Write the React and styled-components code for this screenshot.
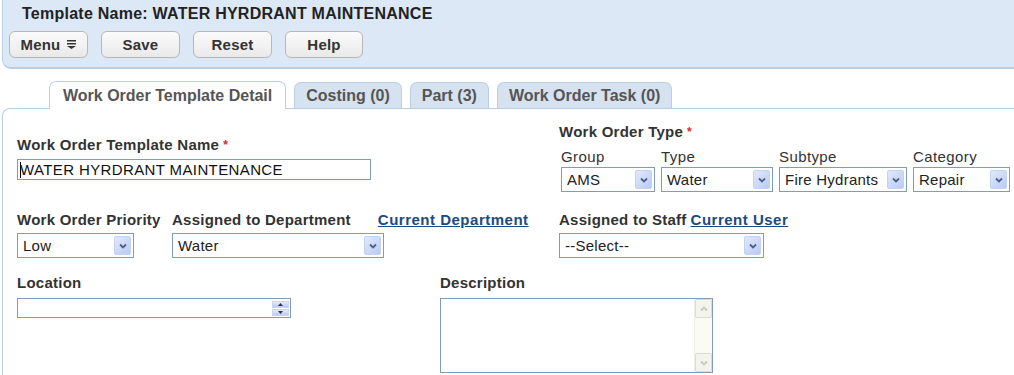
import React from "react"
import styled, { createGlobalStyle } from "styled-components"

const Global = createGlobalStyle`
  body {
    margin: 0;
    background: #fff;
    font-family: "Liberation Sans", Arial, sans-serif;
    color: #333;
  }
`

const Page = styled.div`
  width: 1014px;
  height: 375px;
  overflow: hidden;
  padding-left: 2px;
  box-sizing: border-box;
`

const Header = styled.div`
  background: #dce8f6;
  border-left: 1px solid #bcd2ea;
  border-bottom: 2px solid #b9cfe6;
  border-bottom-left-radius: 9px;
  height: 69px;
  padding: 5px 0 0 19px;
  box-sizing: border-box;
`

const Title = styled.div`
  font-size: 16px;
  font-weight: bold;
  line-height: 18px;
  letter-spacing: 0.25px;
  color: #222;
`

const Toolbar = styled.div`
  display: flex;
  gap: 13px;
  margin-top: 8px;
  margin-left: -13px;
`

const ToolButton = styled.button`
  width: ${p => p.$w || 79}px;
  height: 27px;
  display: flex;
  align-items: center;
  justify-content: center;
  gap: 7px;
  border: 1px solid #b7b7b7;
  border-radius: 6px;
  background: linear-gradient(#fbfbfb, #e9e9e9);
  font-family: "Liberation Sans", Arial, sans-serif;
  font-size: 15px;
  font-weight: bold;
  letter-spacing: 0.2px;
  color: #333;
  padding: 0;
`

const TabRow = styled.div`
  display: flex;
  gap: 8px;
  padding-left: 47px;
  margin-top: 12px;
  position: relative;
  z-index: 1;
`

const Tab = styled.div`
  padding: 0 ${p => (p.$active ? 13 : 11)}px;
  display: flex;
  align-items: center;
  font-size: 16px;
  font-weight: bold;
  color: #555;
  border: 1px solid #b9cfe6;
  border-bottom: none;
  border-radius: 7px 7px 0 0;
  background: ${p => (p.$active ? "#fff" : "#d6e2ef")};
  height: ${p => (p.$active ? 27 : 25)}px;
  align-self: flex-end;
  margin-bottom: ${p => (p.$active ? -1 : 0)}px;
`

const Panel = styled.div`
  border-top: 1px solid #b9cfe6;
  border-left: 1px solid #b9cfe6;
  border-top-left-radius: 8px;
  padding: 14px 0 0 14px;
  height: 280px;
`

const Row = styled.div`
  display: flex;
  align-items: flex-start;
  margin-top: ${p => p.$mt || 0}px;
`

const Block = styled.div`
  width: ${p => (p.$w ? p.$w + "px" : "auto")};
  padding-top: ${p => p.$pt || 0}px;
  flex-shrink: 0;
`

const Label = styled.div`
  font-size: 15px;
  font-weight: bold;
  line-height: 18px;
  letter-spacing: 0.25px;
  color: #333;
  white-space: nowrap;
  margin-bottom: ${p => p.$mb ?? 4}px;
  display: flex;
  gap: ${p => p.$gap || 4}px;
`

const Req = styled.span`
  color: #e0262a;
  font-size: 12px;
`

const Link = styled.a`
  color: #1a4b82;
  text-decoration: underline;
  letter-spacing: 0.5px;
  cursor: pointer;
`

const SubLabel = styled.div`
  font-size: 15px;
  line-height: 18px;
  letter-spacing: 0.4px;
  color: #333;
  margin-bottom: 1px;
`

const TypeGrid = styled.div`
  display: grid;
  grid-template-columns: 94px 112px 128px 97px;
  column-gap: 6px;
  margin-top: 7px;
  padding-left: 2px;
`

const TextInput = styled.div`
  width: ${p => p.$w}px;
  height: ${p => p.$h || 21}px;
  box-sizing: border-box;
  border: 1px solid #7f9db9;
  font-size: 15px;
  line-height: 19px;
  letter-spacing: 0.38px;
  padding-left: 2px;
  color: #111;
  display: flex;
  align-items: center;
  justify-content: space-between;
  background: #fff;
`

const Caret = styled.span`
  width: 1px;
  height: 16px;
  background: #000;
  margin-right: -1px;
`

const SelectBox = styled.div`
  width: ${p => p.$w}px;
  height: 25px;
  box-sizing: border-box;
  border: 1px solid #7f9db9;
  display: flex;
  align-items: center;
  justify-content: space-between;
  padding: 0 2px 0 5px;
  font-size: 15px;
  letter-spacing: 0.25px;
  color: #222;
  background: #fff;
`

const ArrowBtn = styled.span`
  width: 17px;
  height: 19px;
  box-sizing: border-box;
  border: 1px solid #c3d1f3;
  border-radius: 2px;
  background: linear-gradient(135deg, #e1e9fd, #b9caf5);
  display: flex;
  align-items: center;
  justify-content: center;
`

const Spin = styled.div`
  display: flex;
  flex-direction: column;
  gap: 1px;
  margin-right: 1px;
`

const SpinBtn = styled.span`
  width: 17px;
  height: 7px;
  background: linear-gradient(#e3eafc, #b8c9f4);
  border: 1px solid #c9d5f3;
  box-sizing: border-box;
  display: flex;
  align-items: center;
  justify-content: center;
`

const TextArea = styled.div`
  width: 273px;
  height: 75px;
  box-sizing: border-box;
  border: 1px solid #7f9db9;
  display: flex;
  justify-content: flex-end;
  background: #fff;
`

const ScrollBar = styled.div`
  width: 17px;
  background: #fbfbf6;
  border-left: 1px solid #eeeee6;
  display: flex;
  flex-direction: column;
  justify-content: space-between;
`

const ScrollBtn = styled.span`
  height: 17px;
  background: #f4f4ef;
  border: 1px solid #dcdcd4;
  border-radius: 2px;
  display: flex;
  align-items: center;
  justify-content: center;
`

const Chevron = ({ up, color = "#4d5f86" }) => (
  <svg width="8" height="6" viewBox="0 0 8 6">
    <path
      d={up ? "M1 4.5 L4 1.5 L7 4.5" : "M1 1.5 L4 4.5 L7 1.5"}
      fill="none"
      stroke={color}
      strokeWidth="1.8"
    />
  </svg>
)

const MenuIcon = () => (
  <svg width="9" height="9" viewBox="0 0 9 9">
    <rect x="0" y="0" width="9" height="1.5" fill="#333" />
    <rect x="0" y="3" width="9" height="1.5" fill="#333" />
    <path d="M0 6 L9 6 L4.5 9 Z" fill="#333" />
  </svg>
)

const Select = ({ w, value }) => (
  <SelectBox $w={w}>
    <span>{value}</span>
    <ArrowBtn>
      <Chevron />
    </ArrowBtn>
  </SelectBox>
)

const Tri = ({ up }) => (
  <svg width="5" height="3" viewBox="0 0 5 3">
    <path d={up ? "M0 3 L2.5 0 L5 3 Z" : "M0 0 L2.5 3 L5 0 Z"} fill="#333" />
  </svg>
)

const types = [
  ["Group", "AMS", 94],
  ["Type", "Water", 112],
  ["Subtype", "Fire Hydrants", 128],
  ["Category", "Repair", 97],
]

const App = () => {
  return (
    <Page>
      <Global />
      <Header>
        <Title>Template Name: WATER HYRDRANT MAINTENANCE</Title>
        <Toolbar>
          <ToolButton>
            Menu <MenuIcon />
          </ToolButton>
          <ToolButton>Save</ToolButton>
          <ToolButton>Reset</ToolButton>
          <ToolButton $w={78}>Help</ToolButton>
        </Toolbar>
      </Header>

      <TabRow>
        <Tab $active>Work Order Template Detail</Tab>
        <Tab>Costing (0)</Tab>
        <Tab>Part (3)</Tab>
        <Tab>Work Order Task (0)</Tab>
      </TabRow>

      <Panel>
        <Row>
          <Block $w={542} $pt={13}>
            <Label $mb={5}>
              Work Order Template Name <Req>*</Req>
            </Label>
            <TextInput $w={354}>
              <span style={{ display: "flex", alignItems: "center" }}>
                <Caret />
                WATER HYRDRANT MAINTENANCE
              </span>
            </TextInput>
          </Block>
          <Block>
            <Label $mb={0}>
              Work Order Type <Req>*</Req>
            </Label>
            <TypeGrid>
              {types.map(([l, v, w]) => (
                <div key={l}>
                  <SubLabel>{l}</SubLabel>
                  <Select w={w} value={v} />
                </div>
              ))}
            </TypeGrid>
          </Block>
        </Row>

        <Row $mt={19}>
          <Block $w={155}>
            <Label>Work Order Priority</Label>
            <Select w={117} value="Low" />
          </Block>
          <Block $w={387}>
            <Label $gap={27}>
              <span>Assigned to Department</span>
              <Link>Current Department</Link>
            </Label>
            <Select w={212} value="Water" />
          </Block>
          <Block>
            <Label>
              <span>Assigned to Staff</span>
              <Link>Current User</Link>
            </Label>
            <Select w={205} value="--Select--" />
          </Block>
        </Row>

        <Row $mt={16}>
          <Block $w={423}>
            <Label $mb={6}>Location</Label>
            <TextInput $w={274} $h={20}>
              <span />
              <Spin>
                <SpinBtn>
                  <Tri up />
                </SpinBtn>
                <SpinBtn>
                  <Tri />
                </SpinBtn>
              </Spin>
            </TextInput>
          </Block>
          <Block>
            <Label $mb={6}>Description</Label>
            <TextArea>
              <ScrollBar>
                <ScrollBtn>
                  <Chevron up color="#c9c9c2" />
                </ScrollBtn>
                <ScrollBtn>
                  <Chevron color="#c9c9c2" />
                </ScrollBtn>
              </ScrollBar>
            </TextArea>
          </Block>
        </Row>
      </Panel>
    </Page>
  )
}

export default App
